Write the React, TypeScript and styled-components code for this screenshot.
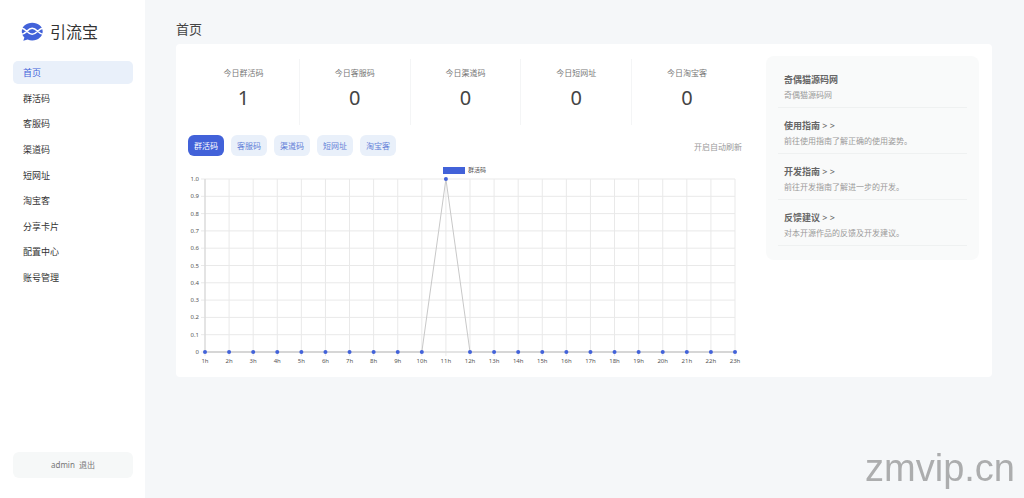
import React, { useState } from 'react';
import styled, { createGlobalStyle } from 'styled-components';

const GlobalStyle = createGlobalStyle`
  *, *::before, *::after { box-sizing: border-box; }
  body {
    margin: 0;
    background: #f5f7f9;
    color: #444;
    font-family: 'Noto Sans', 'Noto Sans CJK SC', sans-serif;
    font-size: 8px;
    line-height: 12px;
  }
  button { font: inherit; border: 0; cursor: pointer; }
  h1, h2, p, ul, dl, dd { margin: 0; padding: 0; }
  ul { list-style: none; }
  a { color: inherit; text-decoration: none; }
`;

const Page = styled.div`
  display: grid;
  grid-template-columns: 145px minmax(0, 1fr);
  min-height: 100vh;
`;

const Sidebar = styled.aside`
  display: flex;
  flex-direction: column;
  padding: 20px 12px 20px 13px;
  background: #fff;
`;

const Brand = styled.a`
  display: flex;
  align-items: center;
  gap: 7px;
  height: 24px;
  padding-left: 8px;
  color: #333;
  font-size: 16px;
  line-height: 24px;
`;

const Menu = styled.ul`
  display: flex;
  flex-direction: column;
  justify-content: space-between;
  height: 228px;
  margin-top: 17px;
`;

const MenuLink = styled.a<{ $active?: boolean }>`
  display: block;
  padding: 0 10px;
  border-radius: 5px;
  font-size: 9px;
  line-height: 23px;
  color: ${(p) => (p.$active ? '#4262d9' : '#333')};
  background: ${(p) => (p.$active ? '#e9f0fa' : 'transparent')};
`;

const Logout = styled.button`
  height: 26px;
  margin-top: auto;
  border-radius: 6px;
  background: #f6f8f8;
  color: #777;
  white-space: pre;
`;

const Main = styled.main`
  padding: 20px 32px 20px 31px;
`;

const Title = styled.h1`
  font-size: 13px;
  font-weight: 400;
  line-height: 18px;
  color: #444;
`;

const Card = styled.section`
  display: grid;
  grid-template-columns: minmax(0, 1fr) 213px;
  align-items: start;
  gap: 24px;
  margin-top: 6px;
  padding: 12px 13px 12px 12px;
  border-radius: 4px;
  background: #fff;
`;

const Stats = styled.dl`
  display: grid;
  grid-template-columns: repeat(5, 1fr);
  margin-top: 3px;
`;

const Stat = styled.div`
  height: 66px;
  padding-top: 8px;
  text-align: center;
  & + & { border-left: 1px solid #f4f5f6; }
`;

const StatLabel = styled.dt`
  color: #777;
`;

const StatValue = styled.dd`
  margin-top: 5px;
  font-size: 20px;
  line-height: 28px;
  color: #444;
`;

const Toolbar = styled.div`
  display: flex;
  align-items: flex-start;
  justify-content: space-between;
  margin-top: 10px;
`;

const Tabs = styled.div`
  display: flex;
  gap: 7px;
`;

const Tab = styled.button<{ $active: boolean }>`
  width: 36px;
  height: 21px;
  padding: 0;
  border-radius: 6px;
  color: ${(p) => (p.$active ? '#fff' : '#6480d8')};
  background: ${(p) => (p.$active ? '#4262d9' : '#e9f0fa')};
`;

const Refresh = styled.button`
  padding: 6px 0 0;
  background: none;
  color: #999;
  line-height: 12px;
`;

const Chart = styled.svg`
  display: block;
  width: 100%;
  height: auto;
  margin-top: 6px;
`;

const Grid = styled.path`
  fill: none;
  stroke: #e9e9e9;
`;

const Axis = styled.path`
  fill: none;
  stroke: #d4d4d4;
`;

const Series = styled.polyline`
  fill: none;
  stroke: #c8c8c8;
`;

const Tick = styled.text<{ $end?: boolean }>`
  font-size: 6px;
  fill: #555;
  text-anchor: ${(p) => (p.$end ? 'end' : 'middle')};
`;

const LegendText = styled.text`
  font-size: 6px;
  fill: #555;
`;

const Guides = styled.ul`
  padding: 11px 12px 14px;
  border-radius: 8px;
  background: #f9fafa;
`;

const Guide = styled.li`
  height: 46px;
  padding: 6px 6px 0;
  border-bottom: 1px solid #eff1f1;
  &:first-child { height: 41px; }
  & + & { padding-top: 11px; }
`;

const GuideTitle = styled.h2`
  font-size: 9px;
  font-weight: 700;
  line-height: 13px;
  color: #666;
`;

const Arrows = styled.span`
  font-weight: 500;
`;

const GuideText = styled.p`
  margin-top: 3px;
  color: #999;
`;

const Watermark = styled.div`
  position: fixed;
  right: 9px;
  bottom: 8px;
  font-family: 'Liberation Sans', sans-serif;
  font-size: 38px;
  line-height: 44px;
  color: #acadae;
  pointer-events: none;
`;

const menu = ['首页', '群活码', '客服码', '渠道码', '短网址', '淘宝客', '分享卡片', '配置中心', '账号管理'];
const kinds = ['群活码', '客服码', '渠道码', '短网址', '淘宝客'];
const totals = [1, 0, 0, 0, 0];
const guides = [
  { title: '奇偶猫源码网', text: '奇偶猫源码网', link: false },
  { title: '使用指南', text: '前往使用指南了解正确的使用姿势。', link: true },
  { title: '开发指南', text: '前往开发指南了解进一步的开发。', link: true },
  { title: '反馈建议', text: '对本开源作品的反馈及开发建议。', link: true },
];

const hours = Array.from({ length: 23 }, (_, i) => i + 1);
const levels = Array.from({ length: 11 }, (_, i) => i / 10);
const plot = { left: 17, right: 547, top: 17, bottom: 190 };
const xOf = (hour: number) => plot.left + ((hour - 1) * (plot.right - plot.left)) / 22;
const yOf = (value: number) => plot.bottom - value * (plot.bottom - plot.top);

function Logo() {
  return (
    <svg width="22" height="20" viewBox="0 0 22 20" aria-hidden="true">
      <path
        fill="#4262d9"
        d="M11.200 .8C5.300 .8 .8 4.600 .8 9.500c0 2.500 1 4.600 2.600 6.100L2.300 18.800l4.300-1.300c1.400.6 3 .9 4.600.9 6 0 10.500-3.900 10.500-8.900S17.200 .8 11.200 .8Z"
      />
      <path
        fill="none"
        stroke="#fff"
        strokeWidth="1.500"
        d="M.5 6.300C5 6.300 6.500 12.300 11.200 12.300S17.400 6.300 22 6.300M.5 12.300C5 12.300 6.500 6.300 11.200 6.300S17.400 12.300 22 12.300"
      />
    </svg>
  );
}

function HourlyChart({ label, peak }: { label: string; peak: number }) {
  const values = hours.map((hour) => (hour === 11 ? peak : 0));
  const grid =
    hours.map((h) => `M${xOf(h)} ${plot.top}V${plot.bottom + 4}`).join('') +
    levels.map((v) => `M${plot.left - 4} ${yOf(v)}H${plot.right}`).join('');
  return (
    <Chart viewBox="0 0 554 203" role="img" aria-label={label}>
      <Grid d={grid} />
      <Axis d={`M${plot.left} ${plot.top}V${plot.bottom}H${plot.right}`} />
      {levels.map((v) => (
        <Tick key={v} $end x={11} y={yOf(v) + 2}>
          {v === 0 ? '0' : v.toFixed(1)}
        </Tick>
      ))}
      {hours.map((h) => (
        <Tick key={h} x={xOf(h)} y={201}>{`${h}h`}</Tick>
      ))}
      <rect x="255" y="5" width="22" height="7" fill="#4262d9" />
      <LegendText x="280" y="10">{label}</LegendText>
      <Series points={hours.map((h, i) => `${xOf(h)},${yOf(values[i])}`).join(' ')} />
      {hours.map((h, i) => (
        <circle key={h} cx={xOf(h)} cy={yOf(values[i])} r="2" fill="#4262d9" />
      ))}
    </Chart>
  );
}

export default function App() {
  const [active, setActive] = useState(0);
  return (
    <>
      <GlobalStyle />
      <Page>
        <Sidebar>
          <Brand href="#">
            <Logo />
            引流宝
          </Brand>
          <nav>
            <Menu>
              {menu.map((name, i) => (
                <li key={name}>
                  <MenuLink href="#" $active={i === 0}>{name}</MenuLink>
                </li>
              ))}
            </Menu>
          </nav>
          <Logout type="button">{'admin  退出'}</Logout>
        </Sidebar>
        <Main>
          <Title>首页</Title>
          <Card>
            <div>
              <Stats>
                {kinds.map((kind, i) => (
                  <Stat key={kind}>
                    <StatLabel>今日{kind}</StatLabel>
                    <StatValue>{totals[i]}</StatValue>
                  </Stat>
                ))}
              </Stats>
              <Toolbar>
                <Tabs>
                  {kinds.map((kind, i) => (
                    <Tab key={kind} type="button" $active={i === active} onClick={() => setActive(i)}>
                      {kind}
                    </Tab>
                  ))}
                </Tabs>
                <Refresh type="button">开启自动刷新</Refresh>
              </Toolbar>
              <HourlyChart label={kinds[active]} peak={totals[active]} />
            </div>
            <Guides>
              {guides.map((guide) => (
                <Guide key={guide.title}>
                  <GuideTitle>
                    {guide.link ? (
                      <a href="#">
                        {guide.title} <Arrows>&gt; &gt;</Arrows>
                      </a>
                    ) : (
                      guide.title
                    )}
                  </GuideTitle>
                  <GuideText>{guide.text}</GuideText>
                </Guide>
              ))}
            </Guides>
          </Card>
        </Main>
      </Page>
      <Watermark>zmvip.cn</Watermark>
    </>
  );
}
